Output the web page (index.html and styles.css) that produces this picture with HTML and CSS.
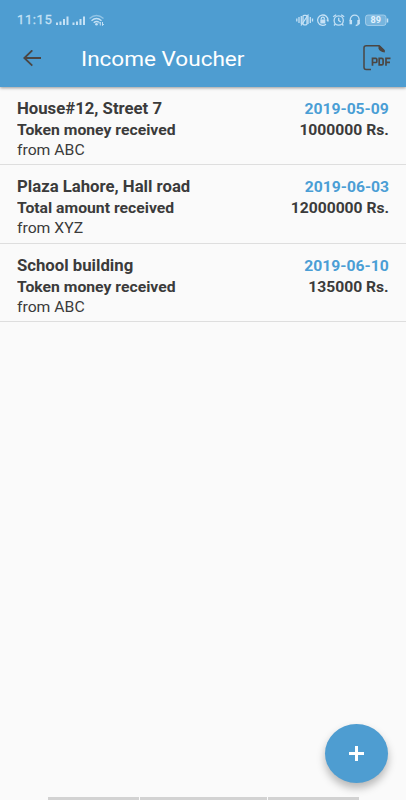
FILE: index.html
```
<!DOCTYPE html>
<html lang="en">
<head>
<meta charset="utf-8">
<title>Income Voucher</title>
<link rel="stylesheet" href="styles.css">
</head>
<body>
<div class="app">
  <header class="header">
    <div class="status">
      <span class="clock">11:15</span>
      <svg class="signals" width="50" height="14" viewBox="0 0 50 14" fill="currentColor">
        <path d="M0 9.500h2v2.500H0zM3.500 8.500h2V12h-2zM7 6h2v6H7zM10.500 3.500h2V12h-2zM16.500 9.500h2v2.500h-2zM20 8.500h2V12h-2zM23.500 6h2v6h-2zM27 3.500h2V12h-2z"/>
        <g fill="none" stroke="currentColor" stroke-width="1.400"><path d="M33.500 5.500Q40.500-.5 47.500 5.500" opacity=".55"/><path d="M35.500 7.700Q40.500 3.500 45.500 7.700M37.700 9.700Q40.500 7.500 43 9.300"/><path d="M44.300 12.500V9M46.500 9v3.500M43 10.500L44.300 9M47.800 11L46.500 12.500" stroke-width="1"/></g>
        <circle cx="40.500" cy="11.300" r="1.300"/>
      </svg>
      <span class="spacer"></span>
      <svg class="indicators" width="94" height="16" viewBox="0 0 94 16" fill="none" stroke="currentColor" stroke-width="1.300">
        <path d="M.8 6.500v3M3 5v6M5.300 4v8M12 4v8M14.300 5v6M16.500 6.500v3" stroke-width="1.300"/>
        <rect x="7" y="3.300" width="4" height="9.500" rx="1"/><path d="M5 13.500L12.500 2.500"/>
        <path d="M30 12.300A5.200 5.200 0 1 1 32 8.500M32.400 9.500l-1.500-2"/><rect x="24.300" y="7.500" width="5" height="4" fill="currentColor" stroke="none"/><path d="M25.200 7.500V6.800a1.600 1.600 0 0 1 3.200 0v.7"/>
        <circle cx="42.700" cy="8.500" r="4.600"/><path d="M42.700 5.700v2.800l2 1.500M37.200 4.700l3-2M48.200 4.700l-3-2M39.400 12L38 13.500M46 12l1.400 1.500"/>
        <path d="M54.300 9V7.500a4.400 4.400 0 0 1 8.800 0V9M63 10.500q-.5 3-3.300 3"/><path d="M54.800 8v4.200M62.600 8v4.200" stroke-width="2.500"/>
        <rect x="69.500" y="3" width="20.500" height="10.500" rx="2.500" fill="currentColor" fill-opacity=".35" stroke-opacity=".6" stroke-width="1"/><path d="M91.500 6.500v4" stroke-width="1.500"/>
        <text class="battery" x="79.700" y="11.400" text-anchor="middle" textLength="10.500" lengthAdjust="spacingAndGlyphs">89</text>
      </svg>
    </div>
    <div class="toolbar">
      <svg class="back" width="18" height="17" viewBox="0 0 18 17" fill="none" stroke="currentColor" stroke-width="1.800"><path d="M18 8H1.500M9.300.3L1.300 8l8 7.700"/></svg>
      <h1 class="title"><span>Income Voucher</span></h1>
      <svg class="pdf" width="30" height="26" viewBox="0 0 30 26"><path d="M9 24.500H4.300Q2 24.500 2 22.200V2.700Q2 .8 4.300.8H17L21.500 5V7" fill="none" stroke="currentColor" stroke-width="1.500"/><path d="M16.500.5h1.500L22.800 5.200v2.300q-5.500-1-6.300-4z" fill="currentColor"/><g fill="none" stroke="currentColor" stroke-width="1.700"><path d="M10.500 20.700v-7.400h3.300q1 0 1 1v2.200q0 1-1 1h-3.300M17.200 13.300h2.500q1.400 0 1.400 1.400v3.800q0 1.400-1.400 1.400h-2.500zM24 20.700v-7.400h4.500M24 17.300h4"/></g></svg>
    </div>
  </header>
  <main class="list">
    <article class="row">
      <div class="info"><h2 class="name">House#12, Street 7</h2><p class="detail">Token money received</p><p class="from">from ABC</p></div>
      <div class="amounts"><p class="date">2019-05-09</p><p class="sum">1000000 Rs.</p></div>
    </article>
    <article class="row">
      <div class="info"><h2 class="name">Plaza Lahore, Hall road</h2><p class="detail">Total amount received</p><p class="from">from XYZ</p></div>
      <div class="amounts"><p class="date">2019-06-03</p><p class="sum">12000000 Rs.</p></div>
    </article>
    <article class="row">
      <div class="info"><h2 class="name">School building</h2><p class="detail">Token money received</p><p class="from">from ABC</p></div>
      <div class="amounts"><p class="date">2019-06-10</p><p class="sum">135000 Rs.</p></div>
    </article>
  </main>
  <button class="fab" aria-label="Add"><svg width="16" height="15" viewBox="0 0 16 15"><path d="M7.500 0v15M0 7.500h15" stroke="#fff" stroke-width="3"/></svg></button>
  <div class="navhint"><i></i><i></i><i></i></div>
</div>
</body>
</html>
```
FILE: styles.css
```
* { box-sizing: border-box; margin: 0; padding: 0; }
body { font-family: Roboto, "Liberation Sans", sans-serif; background: #fafafa; color: #3b3b3b; }
.app { position: relative; display: flex; flex-direction: column; height: 800px; overflow: hidden; }
.header { height: 86.5px; background: #4e9dd1; box-shadow: 0 1px 3px rgba(0,0,0,.4); }
.status { display: flex; align-items: center; height: 30px; padding: 9px 16px 0 17px; color: #c5e1f5; }
.clock { width: 39px; font-size: 13px; line-height: 20px; font-weight: 400; letter-spacing: .6px; -webkit-text-stroke: .3px; }
.signals, .indicators { display: block; flex: none; }
.spacer { flex: 1; }
.battery { font: bold 8.500px Roboto, sans-serif; fill: #e2f2fd; stroke: none; }
.toolbar { display: flex; align-items: center; height: 56px; padding: 0 14px 0 23px; color: #4b4643; }
.title { flex: 1; margin-left: 40px; color: #fff; font-size: 21px; font-weight: 400; line-height: 28px; padding-top: 1px; }
.title span { display: inline-block; transform: scaleX(1.073); transform-origin: left; }
.row { display: flex; justify-content: space-between; height: 78.5px; padding: 12px 17px 0; border-bottom: 1px solid #dedede; }
.name, .detail, .from { transform: scaleX(1.085); transform-origin: left; white-space: nowrap; }
.date, .sum { transform: scaleX(1.08); transform-origin: right; white-space: nowrap; text-align: right; }
.name { font-size: 16px; font-weight: 700; line-height: 20px; transform: scaleX(1.045); }
.detail, .sum { margin-top: 1px; font-size: 14.5px; font-weight: 700; line-height: 22px; }
.from { font-size: 14.5px; line-height: 18.5px; }
.date { font-size: 15px; font-weight: 700; line-height: 20px; color: #4a9ed5; transform: scaleX(1.045); }
.fab { position: absolute; left: 325px; top: 724px; width: 63px; height: 59px; border: 0; border-radius: 50%; background: #4e9dd1; display: flex; align-items: center; justify-content: center; box-shadow: 0 5px 9px rgba(0,0,0,.28); }
.navhint { display: flex; gap: 1px; height: 3px; margin: auto 47px 0 48px; }
.navhint i { flex: 91; background: #d2d2d2; }
.navhint i:nth-child(2) { flex: 127; }
```
